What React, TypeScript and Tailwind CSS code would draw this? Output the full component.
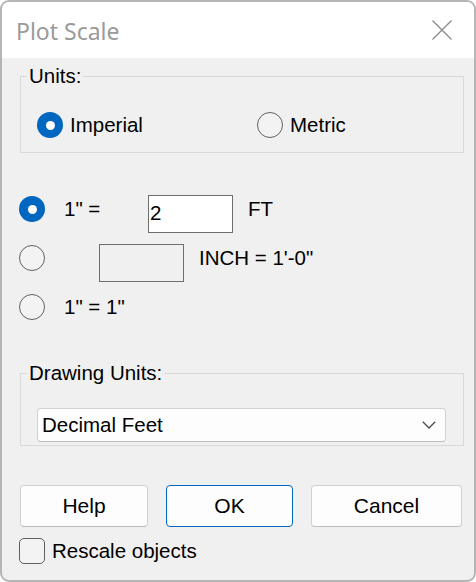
import React from "react";

function Radio({ checked }: { checked?: boolean }) {
  return checked ? (
    <div className="w-[26px] h-[26px] shrink-0 rounded-full bg-[#0067c0] flex items-center justify-center">
      <div className="w-[9px] h-[9px] rounded-full bg-white" />
    </div>
  ) : (
    <div className="w-[26px] h-[26px] shrink-0 rounded-full border-[1.5px] border-[#616161] bg-[#f3f3f3]" />
  );
}

function Group({
  label,
  height,
  children,
  className,
}: {
  label: string;
  height: string;
  children: React.ReactNode;
  className?: string;
}) {
  return (
    <div className={`relative ml-[18px] w-[444px] border border-[#d9d9d9] ${height} ${className ?? ""}`}>
      <span className="absolute -top-[13px] left-[6px] bg-[#f0f0f0] px-[2px] text-[20.5px] leading-[24px] text-black">
        {label}
      </span>
      {children}
    </div>
  );
}

export default function App() {
  return (
    <div className="w-[476px] h-[582px] bg-[#f0f0f0] border-2 border-[#b5b5b5] rounded-[9px] overflow-hidden flex flex-col font-['Liberation_Sans',Arial,sans-serif] text-black">
      {/* Title bar */}
      <div className="h-[56px] shrink-0 bg-white flex items-center justify-between pl-[14px] pr-[22px]">
        <span className="font-['Noto_Sans',sans-serif] text-[23px] leading-[30px] text-[#9a9a9a] mt-[1px]">
          Plot Scale
        </span>
        <svg width="20" height="20" viewBox="0 0 20 20" className="mt-[-1px]">
          <path d="M0.5 0.5 L19.5 19.5 M19.5 0.5 L0.5 19.5" stroke="#8a8a8a" strokeWidth="1.3" fill="none" />
        </svg>
      </div>

      {/* Units group */}
      <Group label="Units:" height="h-[77px]" className="mt-[18px]">
        <div className="flex items-center pt-[35px] pl-[16px]">
          <div className="w-[220px] flex items-center gap-[7px]">
            <Radio checked />
            <span className="text-[20.5px] leading-[26px]">Imperial</span>
          </div>
          <div className="flex items-center gap-[7px]">
            <Radio />
            <span className="text-[20.5px] leading-[26px]">Metric</span>
          </div>
        </div>
      </Group>

      {/* Scale rows */}
      <div className="flex flex-col gap-[23px] mt-[43px] ml-[17px]">
        <div className="flex items-start h-[26px]">
          <Radio checked />
          <span className="ml-[19px] w-[84px] text-[20.5px] leading-[26px]">1" =</span>
          <div className="mt-[-1px] w-[85px] h-[38px] bg-white border border-[#6e6e6e] text-[20.5px] leading-[34px] pl-[1px]">
            2
          </div>
          <span className="ml-[15px] text-[20.5px] leading-[26px]">FT</span>
        </div>
        <div className="flex items-start h-[26px]">
          <Radio />
          <div className="ml-[54px] mt-[-1px] w-[85px] h-[38px] bg-[#f0f0f0] border border-[#6e6e6e]" />
          <span className="ml-[15px] text-[20.5px] leading-[26px]">INCH = 1'-0"</span>
        </div>
        <div className="flex items-start h-[26px]">
          <Radio />
          <span className="ml-[19px] text-[20.5px] leading-[26px]">1" = 1"</span>
        </div>
      </div>

      {/* Drawing Units group */}
      <Group label="Drawing Units:" height="h-[73px]" className="mt-[53px]">
        <div className="pl-[16px] pt-[34px]">
          <div className="w-[409px] h-[34px] bg-[#fdfdfd] border border-[#d2d2d2] border-b-[#bcbcbc] rounded-[4px] flex items-center justify-between pl-[4px] pr-[9px]">
            <span className="text-[20.5px] leading-[26px]">Decimal Feet</span>
            <svg width="14" height="8" viewBox="0 0 14 8">
              <path d="M0.8 0.8 L7 7 L13.2 0.8" stroke="#4a4a4a" strokeWidth="1.3" fill="none" />
            </svg>
          </div>
        </div>
      </Group>

      {/* Buttons */}
      <div className="flex mt-[39px] ml-[18px] gap-[18px]">
        <button className="w-[128px] h-[42px] bg-[#fdfdfd] border border-[#d0d0d0] border-b-[#bdbdbd] rounded-[4px] text-[21px] leading-[26px]">
          Help
        </button>
        <button className="w-[127px] h-[42px] bg-[#fdfdfd] border border-[#0067c0] rounded-[4px] text-[21px] leading-[26px]">
          OK
        </button>
        <button className="w-[151px] h-[42px] bg-[#fdfdfd] border border-[#d0d0d0] border-b-[#bdbdbd] rounded-[4px] text-[21px] leading-[26px]">
          Cancel
        </button>
      </div>

      {/* Checkbox */}
      <div className="flex items-center mt-[11px] ml-[17px] gap-[7px]">
        <div className="w-[26px] h-[26px] rounded-[5px] border-[1.5px] border-[#5f5f5f] bg-[#f3f3f3]" />
        <span className="text-[20.5px] leading-[26px]">Rescale objects</span>
      </div>
    </div>
  );
}
